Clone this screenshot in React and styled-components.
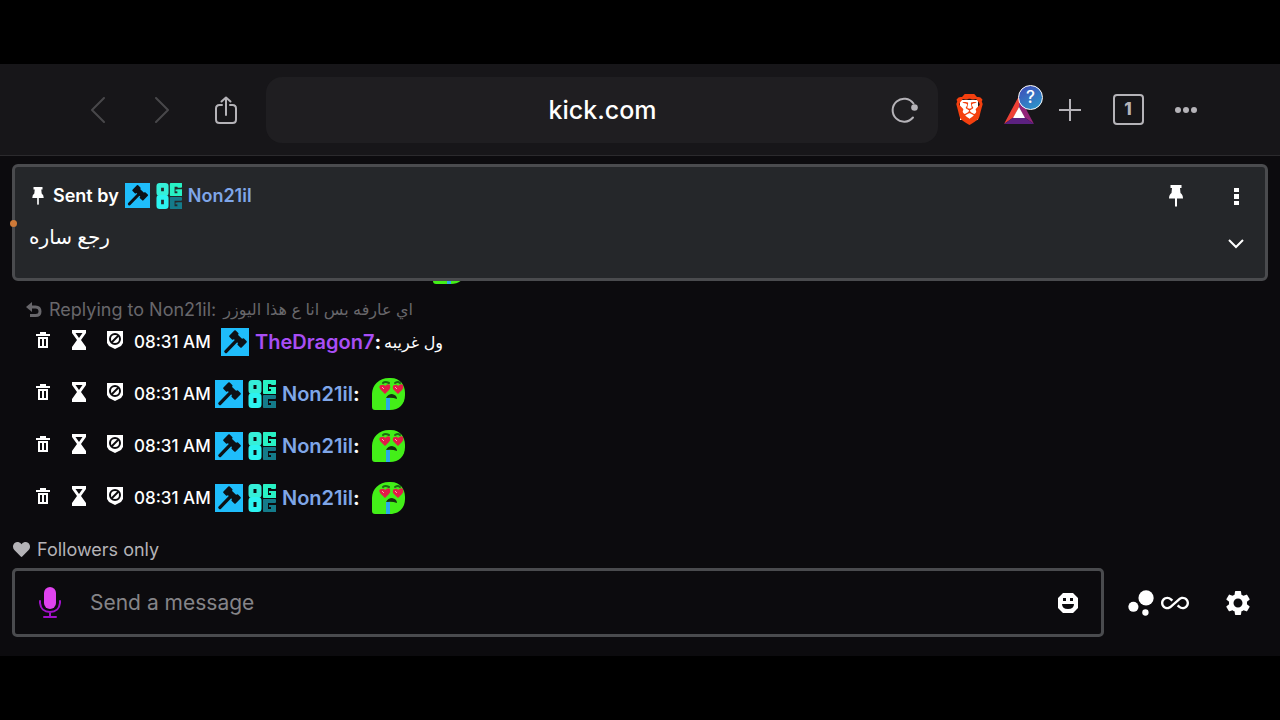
import { useState } from 'react';
import styled, { createGlobalStyle, css } from 'styled-components';
import { MdAllInclusive, MdBubbleChart, MdSettings } from 'react-icons/md';
import { FaHeart } from 'react-icons/fa';
import { SiBrave } from 'react-icons/si';

const GlobalStyle = createGlobalStyle`
  * {
    box-sizing: border-box;
  }
  body {
    margin: 0;
    background-color: #000;
    color: #fff;
    font-family: Inter, 'DejaVu Sans', sans-serif;
  }
`;

const Page = styled.div`
  padding: 64px 0;
`;

const Toolbar = styled.header`
  display: flex;
  align-items: center;
  height: 92px;
  padding: 0 62px 0 66px;
  background-color: #171619;
  border-bottom: 1px solid #2b2a2d;
`;

const IconButton = styled.button`
  display: flex;
  align-items: center;
  justify-content: center;
  flex: none;
  width: ${(props) => props.$width || 36}px;
  height: ${(props) => props.$height || 36}px;
  padding: 0;
  border: none;
  background: none;
  color: ${(props) => props.$color || '#fff'};
  cursor: pointer;
`;

const AddressBar = styled.div`
  display: flex;
  align-items: center;
  flex: 1;
  height: 66px;
  margin-left: 8px;
  padding: 0 11px 0 56px;
  border-radius: 16px;
  background-color: #1f1e21;
`;

const Address = styled.span`
  flex: 1;
  text-align: center;
  font-size: 25px;
  font-weight: 500;
  line-height: 32px;
`;

const LionIcon = styled.span`
  display: flex;
  background: linear-gradient(#fff, #fff) center / 18px 20px no-repeat;
  color: #f4400f;
`;

const TabCount = styled.span`
  width: 31px;
  height: 31px;
  border: 2px solid #b5b3b8;
  border-radius: 4px;
  font-family: Inter, sans-serif;
  font-size: 17px;
  font-weight: 800;
  line-height: 27px;
`;

const RewardsIcon = styled.span`
  position: relative;
  display: flex;
`;

const RewardsBadge = styled.span`
  position: absolute;
  top: -11px;
  right: -9px;
  width: 25px;
  height: 25px;
  border: 1px solid #fff;
  border-radius: 50%;
  background: linear-gradient(150deg, #4249b8, #2a9ccb);
  color: #fff;
  font-family: Inter, sans-serif;
  font-size: 17px;
  font-weight: 500;
  line-height: 23px;
`;

const Chat = styled.main`
  padding: 8px 12px 19px;
  background-color: #0c0b0e;
`;

const Pinned = styled.section`
  position: relative;
  display: flex;
  justify-content: space-between;
  padding: 11px 11px 16px 14px;
  border: 3px solid #4a4b4e;
  border-radius: 6px;
  background-color: #25272a;
`;

const UnreadDot = styled.span`
  position: absolute;
  left: -5px;
  top: 53px;
  width: 7px;
  height: 7px;
  border-radius: 50%;
  background-color: #cf7a38;
`;

const PinnedBody = styled.div`
  display: flex;
  flex-direction: column;
  gap: 8px;
`;

const PinnedHeader = styled.div`
  display: flex;
  align-items: center;
  gap: 6px;
  height: 35px;
  font-size: 18px;
  font-weight: 600;
`;

const PinnedText = styled.p`
  margin: 0;
  font-size: 20px;
  font-weight: 500;
  line-height: 32px;
`;

const PinnedActions = styled.div`
  display: grid;
  grid-template-columns: 36px 36px;
  column-gap: 24px;
  row-gap: 12px;
`;

const CollapseButton = styled(IconButton)`
  grid-column: 2;
`;

const Messages = styled.ul`
  display: flex;
  flex-direction: column;
  justify-content: flex-end;
  gap: 18px;
  height: 234px;
  margin: 0;
  padding: 0 0 0 12px;
  overflow: hidden;
  list-style: none;
`;

const PreviousEmote = styled.li`
  padding-left: 409px;
  height: 34px;
  margin-bottom: -8px;
`;

const Reply = styled.div`
  display: flex;
  align-items: center;
  gap: 7px;
  height: 30px;
  padding: 0 0 2px 2px;
  color: #68676b;
  font-size: 18px;
`;

const ReplyText = styled.bdi`
  font-size: 16px;
`;

const Row = styled.div`
  display: flex;
  align-items: center;
  height: 34px;
`;

const RowActions = styled.div`
  display: flex;
  height: 34px;
  padding: 0 0 4px 1px;
`;

const Time = styled.time`
  width: 76px;
  margin-left: 1px;
  margin-right: ${(props) => (props.$wide ? 11 : 5)}px;
  font-size: 17px;
  font-weight: 500;
  white-space: nowrap;
`;

const Badges = styled.span`
  display: flex;
  gap: 5px;
  margin-right: 6px;
`;

const Name = styled.button`
  padding: 0;
  border: none;
  background: none;
  color: ${(props) => props.$color};
  font: inherit;
  font-size: ${(props) => (props.$small ? 18 : 20)}px;
  font-weight: 600;
  cursor: pointer;
`;

const Colon = styled.span`
  font-size: 20px;
  font-weight: 700;
`;

const MessageText = styled.bdi`
  margin-left: 3px;
  font-size: 16px;
`;

const EmoteSlot = styled.span`
  display: flex;
  margin-left: 12px;
`;

const Notice = styled.div`
  display: flex;
  align-items: center;
  gap: 7px;
  height: 24px;
  margin: 22px 0 7px;
  padding-left: 1px;
  color: #b4b3b7;
  font-size: 18px;
`;

const Composer = styled.form`
  display: flex;
  align-items: center;
  padding-right: 12px;
`;

const sendBox = css`
  border: 3px solid #4a4b4e;
  border-radius: 5px;
`;

const InputBox = styled.div`
  display: flex;
  align-items: center;
  flex: 1;
  height: 69px;
  padding: 0 15px 0 17px;
  ${sendBox}
`;

const MessageInput = styled.input`
  flex: 1;
  min-width: 0;
  height: 48px;
  margin-left: 22px;
  padding: 0;
  border: none;
  outline: none;
  background: none;
  color: #fff;
  font: inherit;
  font-size: 21px;

  &::placeholder {
    color: #858488;
    opacity: 1;
  }
`;

const Points = styled(IconButton)`
  gap: 1px;
  margin-left: 15px;
  margin-right: 29px;
`;

const Chevron = ({ d }) => (
  <svg width="14" height="26" viewBox="0 0 14 26" fill="none" stroke="currentColor" strokeWidth="2" strokeLinecap="round" strokeLinejoin="round">
    <path d={d} />
  </svg>
);

const ShareIcon = () => (
  <svg width="22" height="28" viewBox="0 0 22 28" fill="none" stroke="currentColor" strokeWidth="2" strokeLinecap="round" strokeLinejoin="round">
    <path d="M7 9H4.500Q1 9 1 12.500V23.500Q1 27 4.500 27H17.500Q21 27 21 23.500V12.500Q21 9 17.500 9H15" />
    <path d="M11 19V1.500M6.500 5.500L11 1.500L15.500 5.500" />
  </svg>
);

const ReloadIcon = () => (
  <svg width="28" height="26" viewBox="0 0 28 26" fill="none">
    <path d="M22.500 6.500A11.500 11.500 0 1 0 22 20.500" stroke="currentColor" strokeWidth="2" strokeLinecap="round" />
    <circle cx="23.500" cy="10.500" r="3.300" fill="currentColor" />
  </svg>
);

const PinIcon = ({ width = 14, height = 22 }) => (
  <svg width={width} height={height} viewBox="0 0 14 22" fill="currentColor">
    <path d="M1.500 0H12.500V3H11L11.500 8Q14 9.500 14 13.500H8V21L7 22L6 21V13.500H0Q0 9.500 2.500 8L3 3H1.500Z" />
  </svg>
);

const HammerBadge = ({ size = 28 }) => (
  <svg width={size} height={size} viewBox="0 0 28 28">
    <rect width="28" height="28" fill="#1fbdfb" />
    <g fill="#0d1116" transform="translate(17 11) rotate(44)">
      <rect x="-7" y="-3" width="14" height="6" />
      <rect x="-8.500" y="-4.500" width="5.500" height="9" rx="1" />
      <rect x="3" y="-4.500" width="5.500" height="9" rx="1" />
      <rect x="-1.700" y="0" width="3.400" height="19" rx="1.500" />
    </g>
  </svg>
);

const OgBadge = ({ size = 28 }) => (
  <svg width={size} height={size} viewBox="0 0 28 28">
    <g fill="none" strokeWidth="5">
      <rect x="3" y="2.500" width="8" height="9" rx="1" stroke="#35efd8" />
      <rect x="3" y="15.500" width="8" height="10" rx="1" stroke="#2cf3f0" />
    </g>
    <g fill="#27f2c4">
      <rect x="15" y="0" width="5" height="14" rx="2" />
      <rect x="15" y="0" width="13" height="4" rx="1" />
      <rect x="23" y="0" width="5" height="5" rx="1" />
      <rect x="21" y="7" width="7" height="2" />
      <rect x="23" y="7" width="5" height="7" />
      <rect x="15" y="11" width="9" height="3" rx="1" />
    </g>
    <g fill="#147b8a">
      <rect x="15" y="15" width="5" height="13" rx="2" />
      <rect x="15" y="15" width="13" height="4" rx="1" />
      <rect x="21" y="21" width="7" height="2" />
      <rect x="23" y="21" width="5" height="7" />
      <rect x="15" y="25" width="9" height="3" rx="1" />
    </g>
  </svg>
);

const TrashIcon = () => (
  <svg width="14" height="16" viewBox="0 0 14 16" fill="currentColor">
    <path d="M4 0H10V2H14V4H0V2H4Z" />
    <path fillRule="evenodd" d="M2 5H12V16H2ZM4 7V14H6V7ZM8 7V14H10V7Z" />
  </svg>
);

const HourglassIcon = () => (
  <svg width="16" height="20" viewBox="0 0 16 20" fill="currentColor">
    <path fillRule="evenodd" d="M1 0H15V3L10 10L15 17V20H1V17L6 10L1 3ZM4.500 3L8 8L11.500 3Z" />
  </svg>
);

const ShieldIcon = () => (
  <svg width="18" height="20" viewBox="0 0 18 20">
    <path d="M1 1H17V13L15 16L9 19L3 16L1 13Z" fill="currentColor" />
    <circle cx="9" cy="9" r="5" fill="none" stroke="#0c0b0e" strokeWidth="2" />
    <path d="M5.500 12.500L12.500 5.500" stroke="#0c0b0e" strokeWidth="2" />
  </svg>
);

const Emote = () => (
  <svg width="34" height="34" viewBox="0 0 34 34">
    <path d="M0 30V17C0 8 7 1 17 1H19C28 1 33 8 33 16V18C33 27 27 33 18 33H3Q0 33 0 30Z" fill="#43ef18" />
    <path d="M11 6Q13 4 17 6M23 6Q26 4 28 6" fill="none" stroke="#1c6b12" strokeWidth="2" strokeLinecap="round" />
    <path d="M13 17L8 12Q6 8 10 8Q12 7 13 9Q16 6 18 8Q19 11 17 13Z" fill="#e31b48" />
    <path d="M26 17L21 12Q20 8 23 8Q25 7 26 9Q29 6 31 8Q32 11 30 13Z" fill="#e31b48" />
    <path d="M10 10L12 12M23 10L25 12" stroke="#ff9baa" strokeWidth="1" />
    <path d="M14 21Q16 17 20 17Q25 18 25 22Q20 20 14 21Z" fill="#16300f" />
    <path d="M14 21H18V33H14Z" fill="#2ba9e9" />
  </svg>
);

const MicIcon = () => (
  <svg width="22" height="32" viewBox="0 0 22 32" fill="none">
    <rect x="5" y="0" width="12" height="22" rx="6" fill="#e043ef" />
    <path d="M1 14V16Q2 25 11 25Q20 25 21 16V14M11 25V30M5 30H17" stroke="#a111c9" strokeWidth="2" strokeLinecap="round" />
  </svg>
);

const SmileyIcon = () => (
  <svg width="20" height="20" viewBox="0 0 20 20" fill="currentColor">
    <path fillRule="evenodd" d="M5 0H15L20 5V15L15 20H5L0 15V5ZM5 5V8H8V5ZM12 5V8H15V5ZM4 11Q4 16 10 16Q16 16 16 11Z" />
  </svg>
);

const messages = [
  {
    id: 1,
    name: 'TheDragon7',
    color: '#a84ef5',
    text: 'ول غريبه',
    reply: { to: 'Non21il', text: 'اي عارفه بس انا ع هذا اليوزر' },
  },
  { id: 2, name: 'Non21il', color: '#7fa6e8', og: true },
  { id: 3, name: 'Non21il', color: '#7fa6e8', og: true },
  { id: 4, name: 'Non21il', color: '#7fa6e8', og: true },
];

const Message = ({ message }) => (
  <li>
    {message.reply && (
      <Reply>
        <svg width="16" height="15" viewBox="0 0 16 15" fill="none">
          <path d="M4 5H9.500Q14 5 14 9.500Q14 13.500 9.500 13.500H4" stroke="currentColor" strokeWidth="3" />
          <path d="M0 5L6 0V10Z" fill="currentColor" />
        </svg>
        <span>Replying to {message.reply.to}:</span>
        <ReplyText>{message.reply.text}</ReplyText>
      </Reply>
    )}
    <Row>
      <RowActions>
        <IconButton $height={30} aria-label="Delete message"><TrashIcon /></IconButton>
        <IconButton $height={30} aria-label="Timeout user"><HourglassIcon /></IconButton>
        <IconButton $height={30} aria-label="Ban user"><ShieldIcon /></IconButton>
      </RowActions>
      <Time $wide={!!message.reply}>08:31 AM</Time>
      <Badges>
        <HammerBadge />
        {message.og && <OgBadge />}
      </Badges>
      <Name $color={message.color}>{message.name}</Name>
      <Colon>:</Colon>
      {message.text ? (
        <MessageText>{message.text}</MessageText>
      ) : (
        <EmoteSlot><Emote /></EmoteSlot>
      )}
    </Row>
  </li>
);

const App = () => {
  const [draft, setDraft] = useState('');

  return (
    <Page>
      <GlobalStyle />
      <Toolbar>
        <IconButton $width={64} $height={64} $color="#48474a" aria-label="Back"><Chevron d="M13 1L1 13L13 25" /></IconButton>
        <IconButton $width={64} $height={64} $color="#48474a" aria-label="Forward"><Chevron d="M1 1L13 13L1 25" /></IconButton>
        <IconButton $width={64} $height={64} $color="#b5b3b8" aria-label="Share"><ShareIcon /></IconButton>
        <AddressBar>
          <Address>kick.com</Address>
          <IconButton $width={44} $height={44} $color="#b5b3b8" aria-label="Reload"><ReloadIcon /></IconButton>
        </AddressBar>
        <IconButton $width={62} $height={64} aria-label="Brave Shields">
          <LionIcon><SiBrave size={31} /></LionIcon>
        </IconButton>
        <IconButton $width={38} $height={64} aria-label="Brave Rewards">
          <RewardsIcon>
            <svg width="30" height="28" viewBox="0 0 30 28">
              <path d="M15 0L0 28L10 21L15 11Z" fill="#ee4136" />
              <path d="M15 0L30 28L20 21L15 11Z" fill="#932379" />
              <path d="M0 28H30L20 21H10Z" fill="#5c2180" />
              <path d="M15 11L21 22H9Z" fill="#fff" />
            </svg>
            <RewardsBadge>?</RewardsBadge>
          </RewardsIcon>
        </IconButton>
        <IconButton $width={64} $height={64} $color="#b5b3b8" aria-label="New tab">
          <svg width="22" height="22" viewBox="0 0 22 22" stroke="currentColor" strokeWidth="2">
            <path d="M11 0V22M0 11H22" />
          </svg>
        </IconButton>
        <IconButton $width={52} $height={64} $color="#b5b3b8" aria-label="Show tabs"><TabCount>1</TabCount></IconButton>
        <IconButton $width={64} $height={64} $color="#b5b3b8" aria-label="Menu">
          <svg width="22" height="6" viewBox="0 0 22 6" fill="currentColor">
            <circle cx="3" cy="3" r="3" />
            <circle cx="11" cy="3" r="3" />
            <circle cx="19" cy="3" r="3" />
          </svg>
        </IconButton>
      </Toolbar>

      <Chat>
        <Pinned>
          <UnreadDot />
          <PinnedBody>
            <PinnedHeader>
              <PinIcon width={18} height={18} />
              <span>Sent by</span>
              <HammerBadge size={25} />
              <OgBadge size={26} />
              <Name $small $color="#7fa6e8">Non21il</Name>
            </PinnedHeader>
            <PinnedText><bdi>رجع ساره</bdi></PinnedText>
          </PinnedBody>
          <PinnedActions>
            <IconButton aria-label="Unpin"><PinIcon /></IconButton>
            <IconButton aria-label="More options">
              <svg width="5" height="17" viewBox="0 0 5 17" fill="currentColor">
                <path d="M0 0H5V4H0ZM0 6H5V11H0ZM0 13H5V17H0Z" />
              </svg>
            </IconButton>
            <CollapseButton aria-label="Expand pinned message">
              <svg width="16" height="10" viewBox="0 0 16 10" fill="none" stroke="currentColor" strokeWidth="2">
                <path d="M1 1L8 8L15 1" />
              </svg>
            </CollapseButton>
          </PinnedActions>
        </Pinned>

        <Messages>
          <PreviousEmote><Emote /></PreviousEmote>
          {messages.map((message) => (
            <Message key={message.id} message={message} />
          ))}
        </Messages>

        <Notice>
          <FaHeart size={17} />
          <span>Followers only</span>
        </Notice>
        <Composer onSubmit={(e) => e.preventDefault()}>
          <InputBox>
            <IconButton type="button" aria-label="Voice input"><MicIcon /></IconButton>
            <MessageInput
              aria-label="Message"
              placeholder="Send a message"
              value={draft}
              onChange={(e) => setDraft(e.target.value)}
            />
            <IconButton type="button" aria-label="Emotes"><SmileyIcon /></IconButton>
          </InputBox>
          <Points type="button" $width={72} aria-label="Channel points">
            <MdBubbleChart size={38} />
            <MdAllInclusive size={28} />
          </Points>
          <IconButton type="button" aria-label="Chat settings"><MdSettings size={30} /></IconButton>
        </Composer>
      </Chat>
    </Page>
  );
};

export default App;
